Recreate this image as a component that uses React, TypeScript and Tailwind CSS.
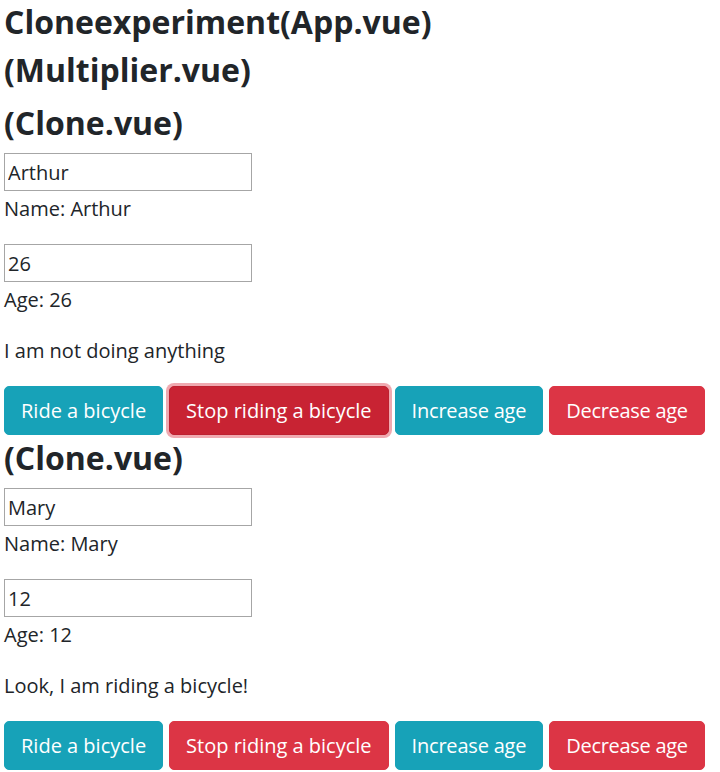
import { useState } from 'react';

type CloneProps = {
    initialName: string;
    initialAge: number;
    initialRiding: boolean;
    focusStop?: boolean;
};

function Clone({ initialName, initialAge, initialRiding, focusStop }: CloneProps) {
    const [name, setName] = useState(initialName);
    const [age, setAge] = useState(initialAge);
    const [riding, setRiding] = useState(initialRiding);

    const btn = "px-4 h-[49px] text-[20px] leading-[30px] text-white border rounded-[5px] whitespace-nowrap";

    return (
        <div>
            <h2 className="text-[32px] leading-[38px] font-bold mb-[11px]">(Clone.vue)</h2>
            <input
                className="block w-[248px] h-[38px] border border-[#a6a6a6] px-[3px] text-[20px] outline-none"
                value={name}
                onChange={(e) => setName(e.target.value)}
            />
            <p className="text-[20px] leading-[30px] pt-[3px] mb-[20px]">Name: {name}</p>
            <input
                className="block w-[248px] h-[38px] border border-[#a6a6a6] px-[3px] text-[20px] outline-none"
                value={age}
                onChange={(e) => setAge(Number(e.target.value) || 0)}
            />
            <p className="text-[20px] leading-[30px] pt-[3px] mb-[18px]">Age: {age}</p>
            <p className="text-[20px] leading-[30px] pt-[3px] mb-[20px]">
                {riding ? 'Look, I am riding a bicycle!' : 'I am not doing anything'}
            </p>
            {/* Botones */}
            <div className="flex gap-[6px] mb-[4px]">
                <button className={`${btn} bg-[#17a2b8] border-[#17a2b8]`} onClick={() => setRiding(true)}>
                    Ride a bicycle
                </button>
                <button
                    className={
                        focusStop
                            ? `${btn} bg-[#c82333] border-[#bd2130] shadow-[0_0_0_3px_rgba(225,83,97,0.5)]`
                            : `${btn} bg-[#dc3545] border-[#dc3545]`
                    }
                    onClick={() => setRiding(false)}
                >
                    Stop riding a bicycle
                </button>
                <button className={`${btn} bg-[#17a2b8] border-[#17a2b8] tracking-[-0.2px]`} onClick={() => setAge(age + 1)}>
                    Increase age
                </button>
                <button className={`${btn} bg-[#dc3545] border-[#dc3545] tracking-[-0.3px]`} onClick={() => setAge(age - 1)}>
                    Decrease age
                </button>
            </div>
        </div>
    );
}

export default function App() {
    return (
        <div className="bg-white text-[#212529] px-1 font-['Open_Sans',sans-serif]">
            <h1 className="text-[32px] leading-[44px] font-bold mb-[7px]">Cloneexperiment(App.vue)</h1>
            <h2 className="text-[32px] leading-[38px] font-bold mb-[15px]">(Multiplier.vue)</h2>
            <Clone initialName="Arthur" initialAge={26} initialRiding={false} focusStop />
            <Clone initialName="Mary" initialAge={12} initialRiding={true} />
        </div>
    );
}
